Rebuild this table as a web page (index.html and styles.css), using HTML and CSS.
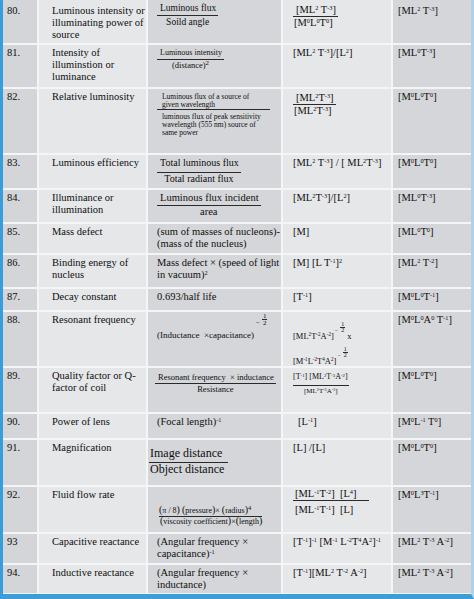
FILE: index.html
```html
<!DOCTYPE html>
<html>
<head>
<meta charset="utf-8">
<link rel="stylesheet" href="styles.css">
</head>
<body>
<div class="page">
<div class="tbl">

<div class="c n p5">80.</div>
<div class="c q p5">Luminous intensity or illuminating power of source</div>
<div class="c f"><span class="fr s95"><span class="nu">Luminous flux</span><span class="de">Soild angle</span></span></div>
<div class="c d p4"><span class="fr fl"><span class="nu nb">[ML<sup>2</sup> T<sup>-3</sup>]</span><span class="de">[M<sup>0</sup>L<sup>0</sup>T<sup>0</sup>]</span></span></div>
<div class="c u p5">[ML<sup>2</sup> T<sup>-3</sup>]</div>

<div class="c n">81.</div>
<div class="c q">Intensity of illuminstion or luminance</div>
<div class="c f p3"><span class="fr s8"><span class="nu">Luminous intensity</span><span class="de d85">(distance)<sup class="big">2</sup></span></span></div>
<div class="c d">[ML<sup>2</sup> T<sup>-3</sup>]/[L<sup>2</sup>]</div>
<div class="c u">[ML<sup>0</sup>T<sup>-3</sup>]</div>

<div class="c n">82.</div>
<div class="c q">Relative luminosity</div>
<div class="c f p4"><div class="blk"><div class="nu">Luminous flux of a source of<br>given wavelength</div><div class="de">luminous flux of peak sensitivity<br>wavelength (555 nm) source of<br>same power</div></div></div>
<div class="c d p3"><span class="fr fl"><span class="nu nb">[ML<sup>2</sup>T<sup>-3</sup>]</span><span class="de">[ML<sup>2</sup>T<sup>-3</sup>]</span></span></div>
<div class="c u">[M<sup>0</sup>L<sup>0</sup>T<sup>0</sup>]</div>

<div class="c n">83.</div>
<div class="c q">Luminous efficiency</div>
<div class="c f"><span class="fr s10"><span class="nu">Total luminous flux</span><span class="de">Total radiant flux</span></span></div>
<div class="c d">[ML<sup>2</sup> T<sup>-3</sup>] / [ ML<sup>2</sup>T<sup>-3</sup>]</div>
<div class="c u">[M<sup>0</sup>L<sup>0</sup>T<sup>0</sup>]</div>

<div class="c n">84.</div>
<div class="c q">Illuminance or illumination</div>
<div class="c f"><span class="fr"><span class="nu">Luminous flux incident</span><span class="de">area</span></span></div>
<div class="c d">[ML<sup>2</sup>T<sup>-3</sup>]/[L<sup>2</sup>]</div>
<div class="c u">[ML<sup>0</sup>T<sup>-3</sup>]</div>

<div class="c n">85.</div>
<div class="c q">Mass defect</div>
<div class="c f nw">(sum of masses of nucleons)-<br>(mass of the nucleus)</div>
<div class="c d">[M]</div>
<div class="c u">[ML<sup>0</sup>T<sup>0</sup>]</div>

<div class="c n">86.</div>
<div class="c q">Binding energy of nucleus</div>
<div class="c f nw">Mass defect × (speed of light<br>in vacuum)<sup>2</sup></div>
<div class="c d">[M] [L T<sup>-1</sup>]<sup>2</sup></div>
<div class="c u">[ML<sup>2</sup> T<sup>-2</sup>]</div>

<div class="c n">87.</div>
<div class="c q">Decay constant</div>
<div class="c f">0.693/half life</div>
<div class="c d">[T<sup>-1</sup>]</div>
<div class="c u">[M<sup>0</sup>L<sup>0</sup>T<sup>-1</sup>]</div>

<div class="c n">88.</div>
<div class="c q">Resonant frequency</div>
<div class="c f r88">(Inductance&nbsp; ×capacitance)<span class="pw"><span class="mn">−</span><span class="sf"><span>1</span><span>2</span></span></span></div>
<div class="c d r88d"><div>[ML<sup>2</sup>T<sup>-2</sup>A<sup>-2</sup>]<span class="pw sm"><span class="mn">−</span><span class="sf"><span>1</span><span>2</span></span></span> x</div><div class="l2">[M<sup>-1</sup>L<sup>-2</sup>T<sup>4</sup>A<sup>2</sup>]<span class="pw sm"><span class="mn">−</span><span class="sf"><span>1</span><span>2</span></span></span></div></div>
<div class="c u">[M<sup>0</sup>L<sup>0</sup>A<sup>0</sup> T<sup>-1</sup>]</div>

<div class="c n">89.</div>
<div class="c q">Quality factor or Q-factor of coil</div>
<div class="c f f89"><span class="fr s85"><span class="nu">Resonant frequency&nbsp; × inductance</span><span class="de">Resistance</span></span></div>
<div class="c d p5x"><span class="fr s75"><span class="nu">[T<sup>-1</sup>] [ML<sup>2</sup>T<sup>-3</sup>A<sup>-2</sup>]</span><span class="de">[ML<sup>2</sup>T<sup>-3</sup>A<sup>-2</sup>]</span></span></div>
<div class="c u">[M<sup>0</sup>L<sup>0</sup>T<sup>0</sup>]</div>

<div class="c n">90.</div>
<div class="c q">Power of lens</div>
<div class="c f">(Focal length)<sup>-1</sup></div>
<div class="c d ind">[L<sup>-1</sup>]</div>
<div class="c u">[M<sup>0</sup>L<sup>-1</sup> T<sup>0</sup>]</div>

<div class="c n">91.</div>
<div class="c q">Magnification</div>
<div class="c f f91"><span class="fr fl s12"><span class="nu">Image distance</span><span class="de">Object distance</span></span></div>
<div class="c d">[L] /[L]</div>
<div class="c u">[M<sup>0</sup>L<sup>0</sup>T<sup>0</sup>]</div>

<div class="c n">92.</div>
<div class="c q">Fluid flow rate</div>
<div class="c f f92"><span class="fr fl s8b"><span class="nu"><span class="bp">(</span>π / 8<span class="bp">)</span> <span class="bp">(</span>pressure<span class="bp">)</span>× <span class="bp">(</span>radius<span class="bp">)</span><sup class="big">4</sup></span><span class="de"><span class="bp">(</span>viscosity coefficient<span class="bp">)</span>×<span class="bp">(</span>length<span class="bp">)</span></span></span></div>
<div class="c d p1"><span class="fr fl"><span class="nu wide">[ML<sup>-1</sup>T<sup>-2</sup>]&nbsp; [L<sup>4</sup>]</span><span class="de">[ML<sup>-1</sup>T<sup>-1</sup>]&nbsp; [L]</span></span></div>
<div class="c u">[M<sup>0</sup>L<sup>3</sup>T<sup>-1</sup>]</div>

<div class="c n">93</div>
<div class="c q">Capacitive reactance</div>
<div class="c f nw">(Angular frequency ×<br>capacitance)<sup>-1</sup></div>
<div class="c d">[T<sup>-1</sup>]<sup>-1</sup> [M<sup>-1</sup> L<sup>-2</sup>T<sup>4</sup>A<sup>2</sup>]<sup>-1</sup></div>
<div class="c u">[ML<sup>2</sup> T<sup>-3</sup> A<sup>-2</sup>]</div>

<div class="c n">94.</div>
<div class="c q">Inductive reactance</div>
<div class="c f nw">(Angular frequency ×<br>inductance)</div>
<div class="c d">[T<sup>-1</sup>][ML<sup>2</sup> T<sup>-2</sup> A<sup>-2</sup>]</div>
<div class="c u">[ML<sup>2</sup> T<sup>-3</sup> A<sup>-2</sup>]</div>

</div>
</div>
</body>
</html>
```

FILE: styles.css
```css
html, body {
  margin: 0;
  padding: 0;
}

body {
  width: 474px;
  height: 599px;
  overflow: hidden;
  background: #3f9dd6;
}

.page {
  width: 474px;
  height: 599px;
  box-sizing: border-box;
  border-left: 3px solid #3b9cd8;
  border-right: 3px solid #a9d4ec;
  border-bottom: 5px solid #3f9dd6;
  background: #eef3f6;
}

.tbl {
  display: grid;
  grid-template-columns: 34px 107px 133px 108px 78px;
  grid-template-rows: 43px 42px 64px 33px 32px 29px 32px 21px 54px 44px 24px 45px 45px 29px 28px;
  gap: 2px;
  background: #f4f5f6;
  font-family: "Liberation Serif", "Times New Roman", serif;
  font-size: 10.5px;
  line-height: 12px;
  color: #0e0e0e;
}

.tbl sup {
  font-size: 0.6em;
  line-height: 0;
  vertical-align: 0.5em;
}

.tbl sup.big {
  font-size: 0.8em;
  vertical-align: 0.45em;
}

.c {
  box-sizing: border-box;
  min-width: 0;
  padding: 2px 0 0 0;
}

.n { background: #d3d5d8; padding-left: 4px; }
.q { background: #e6e7e9; padding-left: 13px; }
.f { background: #d5d6d9; padding-left: 9px; }
.d { background: #e6e7e9; padding-left: 10px; }
.u { background: #d5d6d9; padding-left: 5px; }

.p1 { padding-top: 1px; }
.p3 { padding-top: 3px; }
.p4 { padding-top: 4px; }
.p5 { padding-top: 5px; }
.p5x { padding-top: 4px; }
.ind { padding-left: 15px; }
.nw { white-space: nowrap; }

/* fractions */
.fr {
  display: inline-flex;
  flex-direction: column;
  align-items: center;
  vertical-align: top;
}

.fr.fl { align-items: stretch; }

.nu {
  border-bottom: 1px solid #2a2a2a;
  padding: 0 2px 1px 3px;
}

.nu.nb { padding-bottom: 0; }
.nu.wide { padding: 0 12px 0 2px; }

.fr.fl .de { padding-left: 1px; }
.p1 .fr.fl .de { padding: 3px 0 0 2px; }

.s95 { font-size: 9.5px; line-height: 12px; }
.s8 { font-size: 8px; line-height: 10px; }
.de.d85 { font-size: 8.5px; line-height: 11px; }
.s10 { font-size: 10px; line-height: 12px; }
.s10 .nu { padding-bottom: 3px; }
.s85 { font-size: 8.5px; line-height: 10px; }
.s75 { font-size: 8px; line-height: 10px; }
.s75 .nu { padding: 0 1px 3px 0; }
.s75 .de { font-size: 7px; }
.s12 { font-size: 12px; line-height: 13px; }
.s12 .nu { padding: 0 3px 2px 1px; }
.s12 .de { padding: 0 4px 0 3px; }
.s8b { font-size: 8px; line-height: 9px; }
.s8b .nu { padding: 0 2px 1px 0; }

.bp {
  font-size: 10px;
  line-height: 0;
}

/* relative luminosity block */
.blk {
  width: 113px;
  font-size: 7.5px;
  line-height: 8px;
}

.blk .nu { padding: 0 0 0 5px; }
.blk .de { padding: 3px 0 0 5px; }

/* resonant frequency row */
.r88 {
  font-size: 9px;
  line-height: 11px;
  padding-top: 1px;
  white-space: nowrap;
}

.pw {
  display: inline-flex;
  align-items: flex-end;
  vertical-align: 13px;
  font-size: 7px;
  line-height: 6px;
  margin-left: 2px;
}

.sf {
  display: inline-flex;
  flex-direction: column;
  align-items: center;
  margin-left: 2px;
}

.sf > span:first-child {
  border-bottom: 1px solid #2a2a2a;
  padding: 0 1px;
}

.r88d {
  font-size: 8.5px;
  line-height: 10px;
  padding-top: 10px;
  white-space: nowrap;
}

.pw.sm {
  font-size: 6px;
  line-height: 5px;
  vertical-align: 7px;
  margin-left: 1px;
}

.l2 { margin-top: 6px; }

.f89 { padding-top: 4px; padding-left: 7px; white-space: nowrap; }
.f91 { padding-top: 7px; padding-left: 1px; }
.f92 { padding-top: 19px; padding-left: 11px; white-space: nowrap; }
```
